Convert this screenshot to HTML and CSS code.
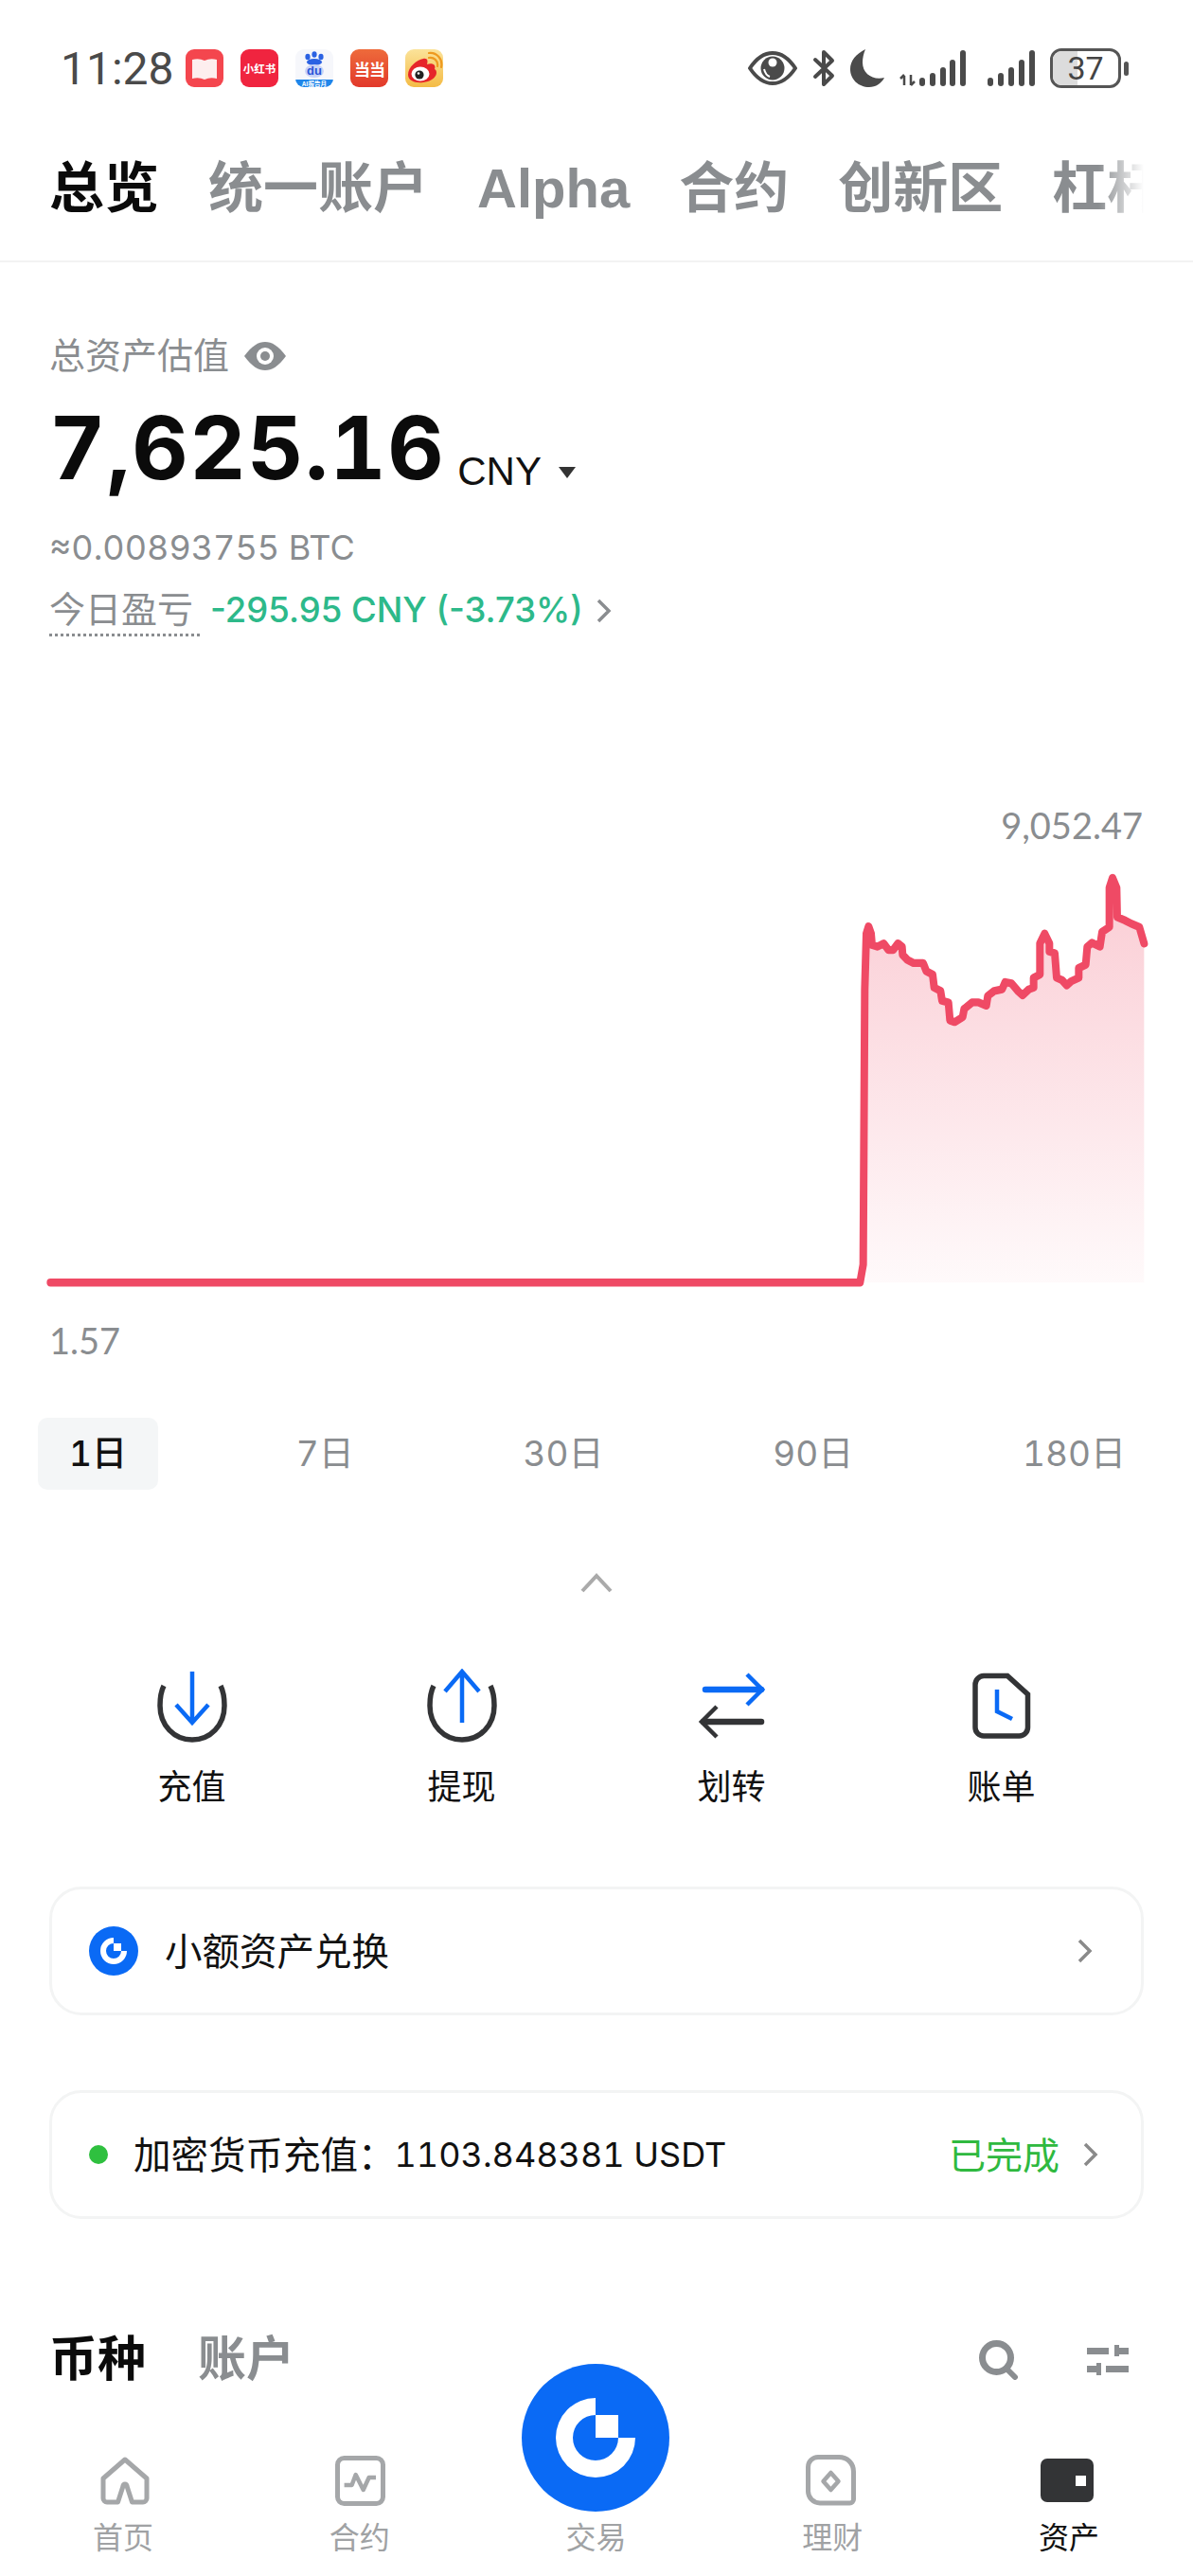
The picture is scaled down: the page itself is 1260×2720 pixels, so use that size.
FILE: index.html
```html
<!DOCTYPE html>
<html lang="zh">
<head>
    <meta charset="utf-8">
    <title>资产总览</title>
    <link rel="stylesheet" href="styles.css">
</head>
<body>
    <svg class="defs" width="0" height="0">
        <symbol id="logo" viewBox="0 0 156 156">
            <circle cx="78" cy="78" r="78" fill="#0a6af5"/>
            <path d="M78 36A42 42 0 1 0 120 78H102A24 24 0 1 1 78 54Z" fill="#fff"/>
            <rect x="78" y="54" width="24" height="24" fill="#fff"/>
        </symbol>
    </svg>

    <!-- status bar -->
    <div class="status">
        <span class="time">11:28</span>
        <div class="apps">
            <div class="app app-book">
                <svg viewBox="0 0 40 40"><path d="M7 11Q14 9 20 12Q26 9 33 11V31Q26 29 20 32Q14 29 7 31Z" fill="#fdeeee"/></svg>
            </div>
            <div class="app app-xhs">小红书</div>
            <div class="app app-baidu">
                <svg viewBox="0 0 40 40">
                    <g fill="#2b62e3">
                        <ellipse cx="13" cy="8" rx="2.600" ry="3.200"/>
                        <ellipse cx="20" cy="5.500" rx="2.600" ry="3.200"/>
                        <ellipse cx="27" cy="8" rx="2.600" ry="3.200"/>
                        <ellipse cx="20" cy="13.500" rx="8" ry="3.600"/>
                    </g>
                    <ellipse cx="20" cy="23" rx="10" ry="7" fill="#c9d4f7"/>
                    <text class="du" x="20" y="27" text-anchor="middle">du</text>
                    <rect y="32" width="40" height="8" fill="#1f86ea"/>
                    <text class="du-sub" x="20" y="38.500" text-anchor="middle">AI报告月</text>
                </svg>
            </div>
            <div class="app app-dd">当当</div>
            <div class="app app-weibo">
                <svg viewBox="0 0 40 40">
                    <path d="M3 27C3 19 12 11 19 10C24 9 24 13 23 16C28 14 33 16 31 21C35 23 34 33 19 35C10 36 3 33 3 27Z" fill="#e6252a"/>
                    <ellipse cx="16" cy="26" rx="9.500" ry="7.500" fill="#fff"/>
                    <circle cx="15" cy="27" r="4.600" fill="#222"/>
                    <circle cx="14" cy="25.500" r="1.300" fill="#fff"/>
                    <path d="M25 9C30 8 35 12 34 18M25 4C33 3 40 10 38 19" fill="none" stroke="#ee9a20" stroke-width="2.200" stroke-linecap="round"/>
                </svg>
            </div>
        </div>
        <div class="sys">
            <svg class="sys-eye" viewBox="0 0 52 36">
                <path d="M2 18C10 6 19 2 26 2C33 2 42 6 50 18C42 30 33 34 26 34C19 34 10 30 2 18Z" fill="none" stroke="#4a4a4a" stroke-width="4" stroke-linejoin="round"/>
                <circle cx="26" cy="18" r="12.500" fill="#4a4a4a"/>
                <circle cx="26" cy="12" r="4.500" fill="#fff"/>
                <path d="M17 19C18 23 20 26 23 27" fill="none" stroke="#fff" stroke-width="2"/>
            </svg>
            <svg class="sys-bt" viewBox="0 0 25 40">
                <path d="M3 11L21 28L12 37V3L21 12L3 29" fill="none" stroke="#4a4a4a" stroke-width="4" stroke-linejoin="round" stroke-linecap="round"/>
            </svg>
            <svg class="sys-moon" viewBox="0 0 36 40">
                <path d="M16 0C6 5 0 12 0 21C0 32 9 40 20 40C27 40 33 36 36 30C24 33 13 26 13 14C13 9 14 5 16 0Z" fill="#4a4a4a"/>
            </svg>
            <svg class="sys-sig-data" viewBox="0 0 70 40">
                <path d="M5 38V28M1 31L5 27M12 27V38M12 38L16 34" fill="none" stroke="#4a4a4a" stroke-width="2.500"/>
                <g fill="#4a4a4a">
                    <rect x="21" y="30" width="6" height="9" rx="3"/>
                    <rect x="32" y="25" width="6" height="14" rx="3"/>
                    <rect x="43" y="19" width="6" height="20" rx="3"/>
                    <rect x="53" y="11" width="6" height="28" rx="3"/>
                    <rect x="64" y="1" width="6" height="38" rx="3"/>
                </g>
            </svg>
            <svg class="sys-sig" viewBox="0 0 50 40">
                <g fill="#4a4a4a">
                    <rect x="0" y="30" width="6" height="9" rx="3"/>
                    <rect x="11" y="25" width="6" height="14" rx="3"/>
                    <rect x="22" y="19" width="6" height="20" rx="3"/>
                    <rect x="33" y="11" width="6" height="28" rx="3"/>
                    <rect x="44" y="1" width="6" height="38" rx="3"/>
                </g>
            </svg>
            <div class="battery">
                <div class="battery-body">
                    <div class="battery-fill"></div>
                    <span class="battery-num">37</span>
                </div>
                <div class="battery-tip"></div>
            </div>
        </div>
    </div>

    <!-- top tabs -->
    <div class="tabs">
        <span class="tab active">总览</span>
        <span class="tab">统一账户</span>
        <span class="tab">Alpha</span>
        <span class="tab">合约</span>
        <span class="tab">创新区</span>
        <span class="tab">杠杆</span>
        <div class="tabs-fade"></div>
    </div>

    <!-- balance summary -->
    <div class="summary">
        <div class="sum-label">
            <span>总资产估值</span>
            <svg class="sum-eye" viewBox="0 0 44 30">
                <path d="M0 15C8 4 15 0 22 0C29 0 36 4 44 15C36 26 29 30 22 30C15 30 8 26 0 15Z" fill="#8a8d90"/>
                <circle cx="22" cy="15" r="9" fill="#fff"/>
                <circle cx="22" cy="15" r="5" fill="#8a8d90"/>
            </svg>
        </div>
        <div class="amount-row">
            <span class="amount">7,625.16</span>
            <span class="unit">CNY</span>
            <span class="unit-caret"></span>
        </div>
        <div class="btc">≈0.00893755 BTC</div>
        <div class="pnl">
            <span class="pnl-label">今日盈亏</span>
            <span class="pnl-value">-295.95 CNY (-3.73%)</span>
            <svg class="pnl-arrow" viewBox="0 0 17 26"><path d="M3 2L14 13L3 24" fill="none" stroke="#8a8d90" stroke-width="3.500"/></svg>
        </div>
    </div>

    <!-- chart -->
    <div class="chart-max">9,052.47</div>
    <svg class="chart" viewBox="0 894 1260 474">
        <defs>
            <linearGradient id="area" x1="0" y1="0" x2="0" y2="1">
                <stop offset="0" stop-color="#ef4a65" stop-opacity=".28"/>
                <stop offset="1" stop-color="#ef4a65" stop-opacity=".03"/>
            </linearGradient>
        </defs>
        <g transform="translate(860 838) scale(.33333 .346)">
            <polygon fill="url(#area)" points="165,1495 165,430 172,408 180,430 183,465 200,470 220,460 235,480 250,480 265,460 278,470 280,495 295,510 315,520 345,520 355,545 375,555 380,595 400,605 405,635 425,640 430,695 445,700 470,685 475,660 500,640 520,640 545,650 550,620 570,605 595,600 605,578 625,582 645,605 660,618 680,600 695,595 695,565 715,555 715,460 730,430 745,460 745,485 762,490 768,565 785,572 800,588 815,575 838,565 838,535 860,525 865,470 880,458 905,470 912,425 935,410 935,290 945,260 958,290 960,380 985,390 1005,400 1030,410 1045,460 1045,1495"/>
            <polyline fill="none" stroke="#ef4a65" stroke-width="24" stroke-linejoin="round" stroke-linecap="round" points="-2420,1495 145,1495 155,1440 160,600 165,430 172,408 180,430 183,465 200,470 220,460 235,480 250,480 265,460 278,470 280,495 295,510 315,520 345,520 355,545 375,555 380,595 400,605 405,635 425,640 430,695 445,700 470,685 475,660 500,640 520,640 545,650 550,620 570,605 595,600 605,578 625,582 645,605 660,618 680,600 695,595 695,565 715,555 715,460 730,430 745,460 745,485 762,490 768,565 785,572 800,588 815,575 838,565 838,535 860,525 865,470 880,458 905,470 912,425 935,410 935,290 945,260 958,290 960,380 985,390 1005,400 1030,410 1045,460"/>
        </g>
    </svg>
    <div class="chart-min">1.57</div>

    <!-- period switch -->
    <div class="periods">
        <span class="period active">1日</span>
        <span class="period">7日</span>
        <span class="period">30日</span>
        <span class="period">90日</span>
        <span class="period">180日</span>
    </div>

    <svg class="collapse" viewBox="0 0 34 21"><path d="M2 19L17 3L32 19" fill="none" stroke="#aaa" stroke-width="4"/></svg>

    <!-- actions -->
    <div class="actions">
        <div class="action">
            <svg viewBox="0 0 80 80">
                <path class="ic-dark" d="M10 18C7 24 6 30 6 39C6 60 21 75 40 75C59 75 74 60 74 39C74 30 73 24 70 18"/>
                <path class="ic-blue" d="M40 3V56M23 38L40 57L57 38"/>
            </svg>
            <span>充值</span>
        </div>
        <div class="action">
            <svg viewBox="0 0 80 80">
                <path class="ic-dark" d="M10 18C7 24 6 30 6 39C6 60 21 75 40 75C59 75 74 60 74 39C74 30 73 24 70 18"/>
                <path class="ic-blue" d="M40 57V4M22 24L40 3L58 24"/>
            </svg>
            <span>提现</span>
        </div>
        <div class="action">
            <svg viewBox="0 0 80 80">
                <path class="ic-blue ic-thick" d="M12 22H71"/>
                <path class="ic-blue" d="M56 6L72 22L56 38"/>
                <path class="ic-dark ic-thick" d="M71 56H10"/>
                <path class="ic-dark ic-thin" d="M24 40L8 56L24 72"/>
            </svg>
            <span>划转</span>
        </div>
        <div class="action">
            <svg viewBox="0 0 80 80">
                <path class="ic-dark" d="M21 7.500H46L67.500 27V62A9 9 0 0 1 58.500 71H21A9 9 0 0 1 12 62V17A9.500 9.500 0 0 1 21 7.500Z"/>
                <path class="ic-blue" d="M35 22V45L51 53"/>
            </svg>
            <span>账单</span>
        </div>
    </div>

    <!-- cards -->
    <div class="card card-convert">
        <svg class="card-logo"><use href="#logo"/></svg>
        <span class="card-text">小额资产兑换</span>
        <svg class="card-arrow" viewBox="0 0 16 26"><path d="M2 2L13 13L2 24" fill="none" stroke="#8a8a8a" stroke-width="3.500"/></svg>
    </div>
    <div class="card card-deposit">
        <span class="card-dot"></span>
        <span class="card-text">加密货币充值：</span>
        <span class="card-num">1103.848381 USDT</span>
        <span class="card-state">已完成</span>
        <svg class="card-arrow" viewBox="0 0 16 26"><path d="M2 2L13 13L2 24" fill="none" stroke="#8a8a8a" stroke-width="3.500"/></svg>
    </div>

    <!-- list header -->
    <div class="list-head">
        <span class="list-tab active">币种</span>
        <span class="list-tab">账户</span>
        <svg class="head-search" viewBox="0 0 42 42">
            <circle cx="18.500" cy="18.500" r="15" fill="none" stroke="#8a8d90" stroke-width="7"/>
            <path d="M29 30L38 39" stroke="#8a8d90" stroke-width="6" stroke-linecap="round"/>
        </svg>
        <svg class="head-filter" viewBox="0 0 44 32">
            <g fill="#8a8d90">
                <rect x="0" y="3" width="23" height="7"/>
                <rect x="29" y="0" width="5" height="12"/>
                <rect x="29" y="3" width="15" height="7"/>
                <rect x="0" y="22" width="15" height="7"/>
                <rect x="10" y="19" width="5" height="13"/>
                <rect x="20" y="22" width="24" height="7"/>
            </g>
        </svg>
    </div>

    <!-- bottom nav -->
    <div class="nav">
        <div class="nav-item">
            <svg viewBox="0 0 60 60"><path class="ic-nav" d="M32 7L55 27V48A4 4 0 0 1 51 52H39.500L34 35A2 2 0 0 0 30 35L24.500 52H13A4 4 0 0 1 9 48V27Z"/></svg>
            <span>首页</span>
        </div>
        <div class="nav-item">
            <svg viewBox="0 0 60 60">
                <rect class="ic-nav" x="6.500" y="5.500" width="48" height="48" rx="7"/>
                <path class="ic-nav ic-nav-thin" d="M13.600 34H21.600L25.700 23L33.700 39L39.700 26H47"/>
            </svg>
            <span>合约</span>
        </div>
        <div class="nav-item">
            <div class="nav-slot"></div>
            <svg class="nav-logo"><use href="#logo"/></svg>
            <span>交易</span>
        </div>
        <div class="nav-item">
            <svg viewBox="0 0 60 60">
                <path class="ic-nav" d="M15 4.500H37C46 4.500 52.500 11 52.500 20V49A4 4 0 0 1 48.500 53H17A12.500 12.500 0 0 1 4.500 40.500V15A10.500 10.500 0 0 1 15 4.500Z"/>
                <path class="ic-nav ic-nav-thin" d="M28.500 21L36.500 30L28.500 39L20.500 30Z"/>
            </svg>
            <span>理财</span>
        </div>
        <div class="nav-item active">
            <svg viewBox="0 0 60 60">
                <rect x="0" y="6" width="56" height="46" rx="7" fill="#333436"/>
                <rect x="37" y="24" width="11" height="11" fill="#fff"/>
            </svg>
            <span>资产</span>
        </div>
    </div>
</body>
</html>
```

FILE: styles.css
```css
* {
    box-sizing: border-box;
}
body {
    margin: 0;
    width: 1260px;
    height: 2720px;
    overflow: hidden;
    background: #fff;
    color: #111;
    font-family: "Liberation Sans", "Noto Sans CJK SC", sans-serif;
}
svg {
    display: block;
}
.defs {
    position: absolute;
}

/* status bar */
.status {
    height: 144px;
    padding: 0 68px 0 64px;
    display: flex;
    align-items: center;
}
.time {
    width: 132px;
    font: 400 48px Roboto, sans-serif;
    color: #4a4a4a;
}
.apps {
    display: flex;
    gap: 18px;
}
.app {
    width: 40px;
    height: 40px;
    border-radius: 9px;
    overflow: hidden;
    display: flex;
    align-items: center;
    justify-content: center;
    font-family: "Noto Sans CJK SC", sans-serif;
    color: #fff;
}
.app-book {
    background: #f4464e;
}
.app-xhs {
    background: #f0243f;
    font-size: 11.500px;
    font-weight: 700;
    white-space: nowrap;
}
.app-baidu {
    background: #f6f7fb;
}
.du {
    font: 700 13px "Liberation Sans", sans-serif;
    fill: #2b55d8;
}
.du-sub {
    font: 700 6.500px "Noto Sans CJK SC", sans-serif;
    fill: #fff;
}
.app-dd {
    background: linear-gradient(#ee6b3b, #e2392b);
    font-size: 17px;
    font-weight: 700;
    letter-spacing: -1px;
    white-space: nowrap;
}
.app-weibo {
    background: linear-gradient(#fbe39a, #f4bb45);
}
.sys {
    margin-left: auto;
    display: flex;
    align-items: center;
}
.sys-eye {
    width: 52px;
    height: 36px;
    margin-right: 16px;
}
.sys-bt {
    width: 25px;
    height: 40px;
    margin-right: 15px;
}
.sys-moon {
    width: 36px;
    height: 40px;
    margin-right: 16px;
}
.sys-sig-data {
    width: 70px;
    height: 40px;
    margin-right: 23px;
}
.sys-sig {
    width: 50px;
    height: 40px;
    margin-right: 16px;
}
.battery {
    display: flex;
    align-items: center;
}
.battery-body {
    position: relative;
    width: 75px;
    height: 42px;
    border: 3.500px solid #555;
    border-radius: 12px;
    overflow: hidden;
    display: flex;
    align-items: center;
    justify-content: center;
}
.battery-fill {
    position: absolute;
    left: 0;
    top: 0;
    bottom: 0;
    width: 37%;
    background: #dcdcdc;
}
.battery-num {
    position: relative;
    font: 400 34px Roboto, sans-serif;
    color: #444;
}
.battery-tip {
    width: 5px;
    height: 15px;
    margin-left: 3px;
    border-radius: 3px;
    background: #555;
}

/* top tabs */
.tabs {
    position: relative;
    height: 133px;
    padding: 24px 0 0 52px;
    display: flex;
    gap: 52px;
    border-bottom: 2px solid #f3f3f3;
    overflow: hidden;
    white-space: nowrap;
}
.tab {
    font-size: 58px;
    line-height: 62px;
    font-weight: 700;
    color: #8a8d90;
}
.tab.active {
    color: #0b0b0b;
}
.tabs-fade {
    position: absolute;
    top: 0;
    right: 0;
    bottom: 0;
    width: 100px;
    background: linear-gradient(to right, rgba(255, 255, 255, 0), #fff 48%);
}

/* balance */
.summary {
    padding: 74px 0 0 52px;
}
.sum-label {
    display: flex;
    align-items: center;
    gap: 16px;
    font-size: 38px;
    line-height: 50px;
    color: #8a8d90;
}
.sum-eye {
    width: 44px;
    height: 30px;
}
.amount-row {
    margin-top: 22px;
    display: flex;
    align-items: flex-end;
}
.amount {
    font: 700 92px/100px Inter, sans-serif;
    font-variant-numeric: tabular-nums;
    letter-spacing: 1.500px;
    color: #0b0b0b;
}
.unit {
    margin-left: 13px;
    font-size: 42px;
    line-height: 50px;
}
.unit-caret {
    margin: 0 0 18px 18px;
    width: 0;
    height: 0;
    border-left: 9px solid transparent;
    border-right: 9px solid transparent;
    border-top: 12px solid #333;
}
.btc {
    margin-top: 30px;
    font: 400 36px/50px Inter, sans-serif;
    font-variant-numeric: tabular-nums;
    color: #8a8d90;
}
.pnl {
    margin-top: 16px;
    display: flex;
    align-items: flex-start;
}
.pnl-label {
    padding-right: 7px;
    border-bottom: 3px dotted #8a8d90;
    font-size: 38px;
    line-height: 50px;
    color: #8a8d90;
}
.pnl-value {
    margin-left: 11px;
    font: 500 36.500px/50px Inter, sans-serif;
    color: #2db98a;
}
.pnl-arrow {
    width: 17px;
    height: 26px;
    margin: 13px 0 0 13px;
}

/* chart */
.chart-max {
    margin-top: 177px;
    padding-right: 53px;
    text-align: right;
    font: 400 38px/44px Lato, sans-serif;
    color: #8a8d90;
}
.chart {
    width: 1260px;
    height: 474px;
}
.chart-min {
    margin-top: 26px;
    padding-left: 52px;
    font: 400 38px/44px Lato, sans-serif;
    color: #8a8d90;
}

/* period switch */
.periods {
    margin-top: 60px;
    padding: 0 38px 0 40px;
    display: flex;
    justify-content: space-between;
}
.period {
    height: 76px;
    padding: 0 33px;
    border-radius: 10px;
    font-family: Inter, "Noto Sans CJK SC", sans-serif;
    font-size: 37px;
    line-height: 76px;
    font-variant-numeric: tabular-nums;
    color: #8a8d90;
}
.period.active {
    background: #f4f6f7;
    color: #111;
    font-weight: 500;
}
.collapse {
    width: 34px;
    height: 21px;
    margin: 88px auto 0;
}

/* actions */
.actions {
    margin-top: 80px;
    padding: 0 60px;
    display: grid;
    grid-template-columns: repeat(4, 285px);
}
.action {
    display: flex;
    flex-direction: column;
    align-items: center;
    font-size: 36px;
    line-height: 46px;
}
.action svg {
    width: 80px;
    height: 80px;
    margin-bottom: 23px;
}
.ic-dark {
    fill: none;
    stroke: #333436;
    stroke-width: 5.500px;
}
.ic-blue {
    fill: none;
    stroke: #0a6af5;
    stroke-width: 4.500px;
}
.ic-thick {
    stroke-width: 6.500px;
    stroke-linecap: round;
}
.ic-thin {
    stroke-width: 4.500px;
}

/* cards */
.card {
    height: 136px;
    margin: 0 52px;
    padding: 0 51px 0 39px;
    border: 3px solid #f3f4f4;
    border-radius: 34px;
    display: flex;
    align-items: center;
}
.card-convert {
    margin-top: 81px;
}
.card-deposit {
    margin-top: 79px;
    padding-right: 45px;
}
.card-logo {
    width: 52px;
    height: 52px;
    margin-right: 28px;
}
.card-dot {
    width: 20px;
    height: 20px;
    margin-right: 27px;
    border-radius: 50%;
    background: #2fc03f;
}
.card-text {
    padding-bottom: 5px;
    font-size: 39.500px;
}
.card-num {
    margin-left: -1px;
    font: 400 36px Inter, sans-serif;
    font-variant-numeric: tabular-nums;
}
.card-state {
    margin-left: auto;
    margin-right: 25px;
    padding-bottom: 5px;
    font-size: 39px;
    color: #2fb93f;
}
.card-arrow {
    width: 16px;
    height: 26px;
}
.card-convert .card-arrow {
    margin-left: auto;
}

/* list header */
.list-head {
    margin-top: 119px;
    padding: 0 68px 0 52px;
    display: flex;
    align-items: center;
    gap: 55px;
}
.list-tab {
    font-size: 51px;
    line-height: 60px;
    font-weight: 700;
    color: #8a8d90;
}
.list-tab.active {
    color: #0b0b0b;
}
.head-search {
    width: 42px;
    height: 42px;
    margin-left: auto;
    margin-right: 17px;
}
.head-filter {
    width: 44px;
    height: 32px;
}

/* bottom nav */
.nav {
    margin-top: 68px;
    padding: 0 0 0 5px;
    display: grid;
    grid-template-columns: repeat(5, 249.800px);
}
.nav-item {
    position: relative;
    display: flex;
    flex-direction: column;
    align-items: center;
    font-size: 32px;
    line-height: 40px;
    color: #a0a2a4;
}
.nav-item svg,
.nav-slot {
    width: 60px;
    height: 60px;
    margin-bottom: 10px;
}
.nav-item.active {
    color: #111;
}
.nav-item svg.nav-logo {
    position: absolute;
    top: -94px;
    left: 46px;
    width: 156px;
    height: 156px;
    margin: 0;
}
.ic-nav {
    fill: none;
    stroke: #a5a7a9;
    stroke-width: 5px;
    stroke-linejoin: round;
}
.ic-nav-thin {
    stroke-width: 4.500px;
}
```
